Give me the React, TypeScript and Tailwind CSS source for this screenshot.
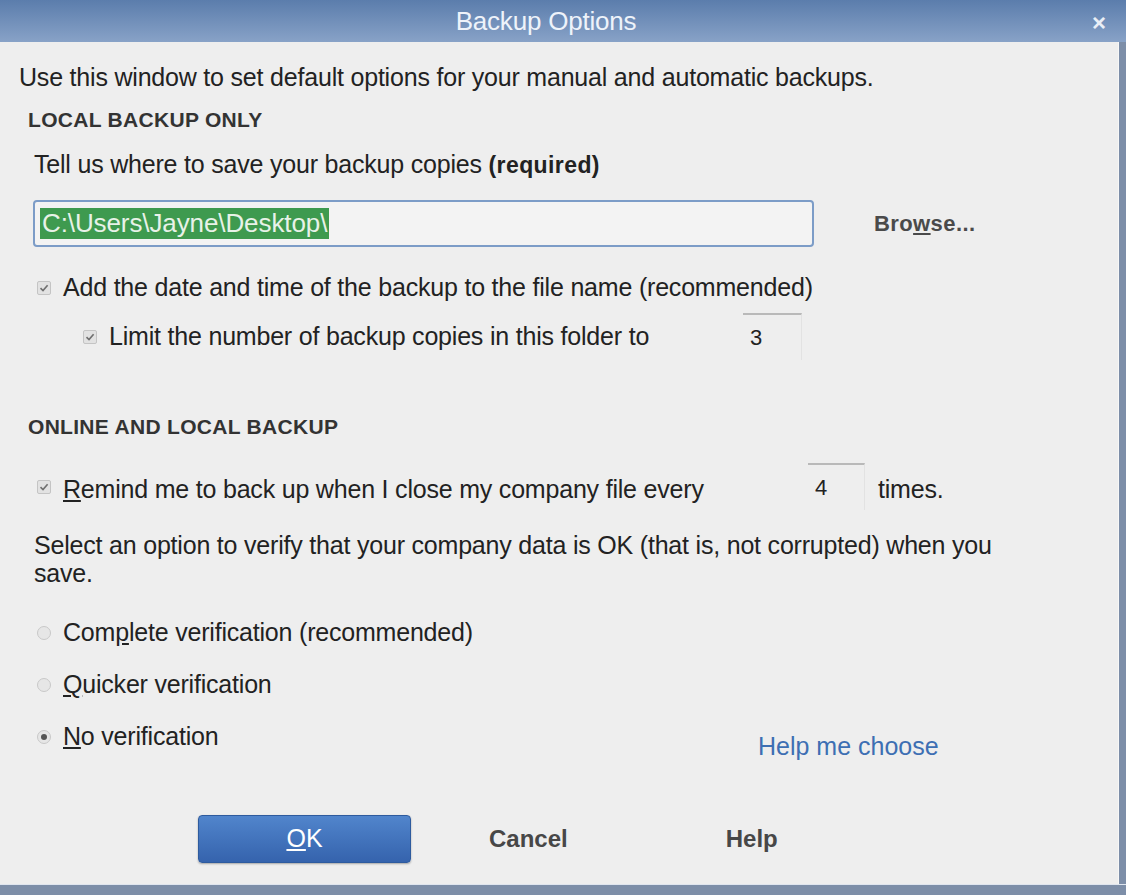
import React from 'react';

const font = { fontFamily: '"Liberation Sans", Arial, sans-serif' };

const CheckBox = () => (
  <span className="inline-flex items-center justify-center w-[14px] h-[14px] rounded-[2px] border border-[#c4c4c4] bg-[#e2e2e2] mr-[12px] shrink-0">
    <svg width="10" height="10" viewBox="0 0 10 10">
      <path d="M1.5 5.2 L4 7.6 L8.6 2.2" fill="none" stroke="#6f6f6f" strokeWidth="1.6" />
    </svg>
  </span>
);

const Radio = ({ checked }: { checked?: boolean }) => (
  <span className="inline-flex items-center justify-center w-[14px] h-[14px] rounded-full border border-[#c8c8c8] bg-[#e6e6e6] mr-[12px] shrink-0">
    {checked && <span className="w-[6px] h-[6px] rounded-full bg-[#555]" />}
  </span>
);

const NumBox = ({ value, w }: { value: string; w: string }) => (
  <div className={`${w} h-[47px] border-t-2 border-t-[#b9b9b9] border-r border-r-[#e2e2e2] flex items-center pl-[7px] text-[22px] text-[#222]`}>
    {value}
  </div>
);

const App = () => {
  return (
    <div className="w-[1126px] h-[895px] bg-[#7d8ea8] flex flex-col overflow-hidden" style={font}>
      {/* title bar */}
      <div className="h-[42px] shrink-0 bg-gradient-to-b from-[#5b7dac] to-[#88a2c7] flex items-center relative">
        <div className="flex-1 text-center text-[26px] text-[#eef3fa] tracking-[-0.2px] pr-[34px]">Backup Options</div>
        <span className="absolute right-[20px] top-[5px] text-[24px] font-bold text-[#e9eef6]">×</span>
      </div>

      <div className="flex-1 flex min-h-0">
        <div className="flex-1 bg-[#eeeeee] border-r border-[#f7f7f7] flex flex-col text-[#222]">
          <div className="mt-[16px] h-[40px] flex items-center pl-[19px] text-[25px] tracking-[-0.2px]">
            Use this window to set default options for your manual and automatic backups.
          </div>
          <div className="h-[44px] flex items-center pl-[28px] text-[21px] font-bold text-[#333] tracking-[0.3px]">
            LOCAL BACKUP ONLY
          </div>
          <div className="h-[46px] flex items-center pl-[34px] text-[25px] tracking-[-0.2px]">
            Tell us where to save your backup copies&nbsp;<span className="font-bold text-[23px] tracking-[0.4px]">(required)</span>
          </div>

          <div className="mt-[12px] h-[47px] flex items-center">
            <div className="ml-[33px] w-[781px] h-[47px] border-2 border-[#7c9cc7] rounded-[4px] bg-[#f3f3f3] flex items-center pl-[5px]">
              <span className="bg-[#3e9a4f] text-[#e8f2e8] text-[26px] leading-[31px] px-[2px] tracking-[-0.1px]">C:\Users\Jayne\Desktop\</span>
            </div>
            <div className="ml-[60px] text-[22px] font-bold text-[#4a4a4a] tracking-[0.4px]">
              Bro<span className="underline underline-offset-2">w</span>se...
            </div>
          </div>

          <div className="mt-[21px] h-[40px] flex items-center pl-[37px] text-[25px] tracking-[-0.2px]">
            <CheckBox />
            Add the date and time of the backup to the file name (recommended)
          </div>
          <div className="mt-[5px] h-[47px] flex items-center pl-[83px] text-[25px] tracking-[-0.2px]">
            <CheckBox />
            <span className="w-[634px]">Limit the number of backup copies in this folder to</span>
            <NumBox value="3" w="w-[59px]" />
          </div>

          <div className="mt-[45px] h-[44px] flex items-center pl-[28px] text-[21px] font-bold text-[#333] tracking-[0.3px]">
            ONLINE AND LOCAL BACKUP
          </div>
          <div className="mt-[14px] h-[47px] flex items-center pl-[37px] text-[25px] tracking-[-0.2px]">
            <CheckBox />
            <span className="w-[745px] pt-[6px]">
              <span className="underline underline-offset-2">R</span>emind me to back up when I close my company file every
            </span>
            <NumBox value="4" w="w-[57px]" />
            <span className="ml-[13px] pt-[6px]">times.</span>
          </div>

          <div className="mt-[21px] pl-[34px] pr-[118px] text-[25px] leading-[28px] tracking-[-0.2px]">
            Select an option to verify that your company data is OK (that is, not corrupted) when you save.
          </div>

          <div className="mt-[20px] h-[52px] flex items-center pl-[37px] text-[25px] tracking-[-0.2px]">
            <Radio />
            <span>Com<span className="underline underline-offset-2">p</span>lete verification (recommended)</span>
          </div>
          <div className="h-[52px] flex items-center pl-[37px] text-[25px] tracking-[-0.2px]">
            <Radio />
            <span><span className="underline underline-offset-2">Q</span>uicker verification</span>
          </div>
          <div className="h-[52px] flex items-center pl-[37px] text-[25px] tracking-[-0.2px]">
            <Radio checked />
            <span className="w-[695px]"><span className="underline underline-offset-2">N</span>o verification</span>
            <span className="mt-[20px] text-[#3d6fb3] tracking-[0px]">Help me choose</span>
          </div>

          <div className="mt-[52px] h-[48px] flex items-center">
            <button className="ml-[198px] w-[213px] h-[48px] rounded-[4px] border border-[#2e5b9e] bg-gradient-to-b from-[#5185cc] to-[#3563ad] text-white text-[25px] shadow-[0_1px_2px_rgba(0,0,0,0.3)]">
              <span className="underline underline-offset-2">O</span>K
            </button>
            <span className="ml-[78px] text-[24px] font-bold text-[#474747]">Cancel</span>
            <span className="ml-[158px] text-[24px] font-bold text-[#474747]">Help</span>
          </div>
        </div>
        <div className="w-[7px] shrink-0 bg-[#7d8ea8]" />
      </div>
      <div className="h-[11px] shrink-0 bg-[#7d8ea8] border-t border-[#dfe5ee]" />
    </div>
  );
};

export default App;
